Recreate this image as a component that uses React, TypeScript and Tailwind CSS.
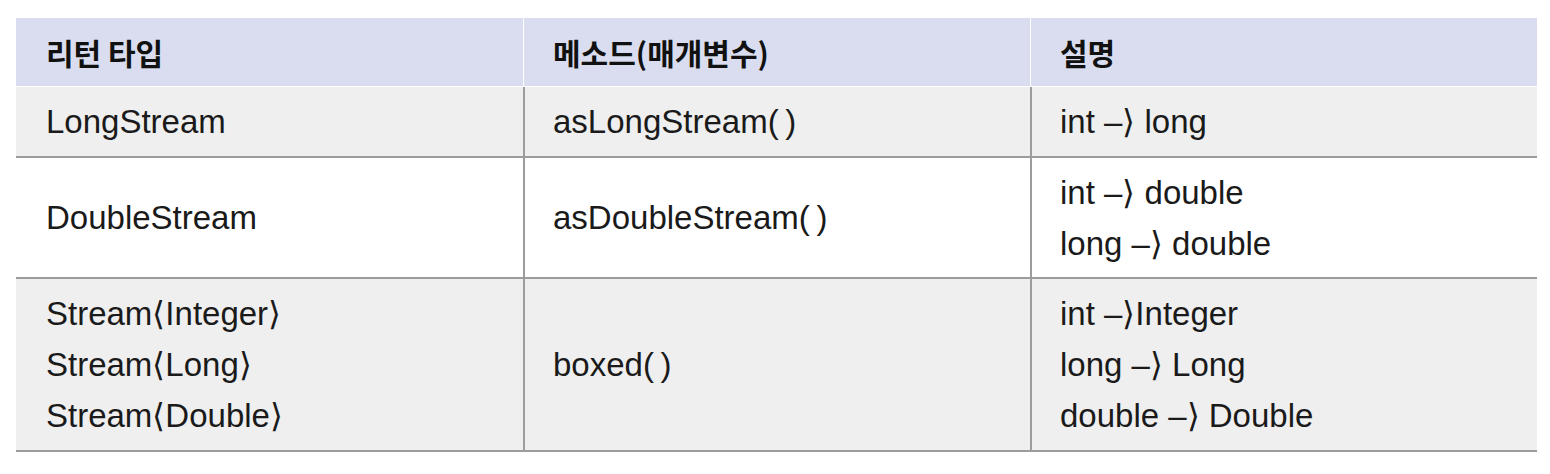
const font = { fontFamily: '"Liberation Sans", "Noto Sans CJK KR", sans-serif' };
const headFont = { fontFamily: '"Noto Sans CJK KR", "Liberation Sans", sans-serif' };

interface Row {
  type: string[];
  method: string;
  desc: string[];
  shaded: boolean;
  height: string;
}

const rows: Row[] = [
  {
    type: ["LongStream"],
    method: "asLongStream(\u2009)",
    desc: ["int –⟩ long"],
    shaded: true,
    height: "h-[71px]",
  },
  {
    type: ["DoubleStream"],
    method: "asDoubleStream(\u2009)",
    desc: ["int –⟩ double", "long –⟩ double"],
    shaded: false,
    height: "h-[121px]",
  },
  {
    type: ["Stream⟨Integer⟩", "Stream⟨Long⟩", "Stream⟨Double⟩"],
    method: "boxed(\u2009)",
    desc: ["int –⟩Integer", "long –⟩ Long", "double –⟩ Double"],
    shaded: true,
    height: "h-[173px]",
  },
];

function Lines({ lines }: { lines: string[] }) {
  return (
    <div className="flex flex-col">
      {lines.map((l, i) => (
        <span key={i} className="leading-[51px] whitespace-pre">
          {l}
        </span>
      ))}
    </div>
  );
}

export default function App() {
  return (
    <div className="bg-white w-[1550px] h-[474px] pt-[18px] pl-4" style={font}>
      <div className="w-[1521px] text-[33px] text-[#1a1a1a]">
        {/* header */}
        <div
          className="grid grid-cols-[507px_507px_507px] h-[68px] bg-[#d9ddef] font-bold text-[30px] text-[#111]"
          style={headFont}
        >
          <div className="flex items-center pl-[30px]">리턴 타입</div>
          <div className="flex items-center pl-[29px] border-l border-white">메소드(매개변수)</div>
          <div className="flex items-center pl-[29px] border-l border-white">설명</div>
        </div>

        {rows.map((row, i) => (
          <div
            key={i}
            className={`grid grid-cols-[507px_507px_507px] border-b-2 border-[#9c9c9c] ${row.height} ${
              row.shaded ? "bg-[#efefef]" : "bg-white"
            } ${i === 0 ? "mt-px" : ""}`}
          >
            <div className="flex items-center pl-[30px]">
              <Lines lines={row.type} />
            </div>
            <div className="flex items-center pl-7 border-l-2 border-[#9c9c9c]">
              <Lines lines={[row.method]} />
            </div>
            <div className="flex items-center pl-7 border-l-2 border-[#9c9c9c]">
              <Lines lines={row.desc} />
            </div>
          </div>
        ))}
      </div>
    </div>
  );
}
